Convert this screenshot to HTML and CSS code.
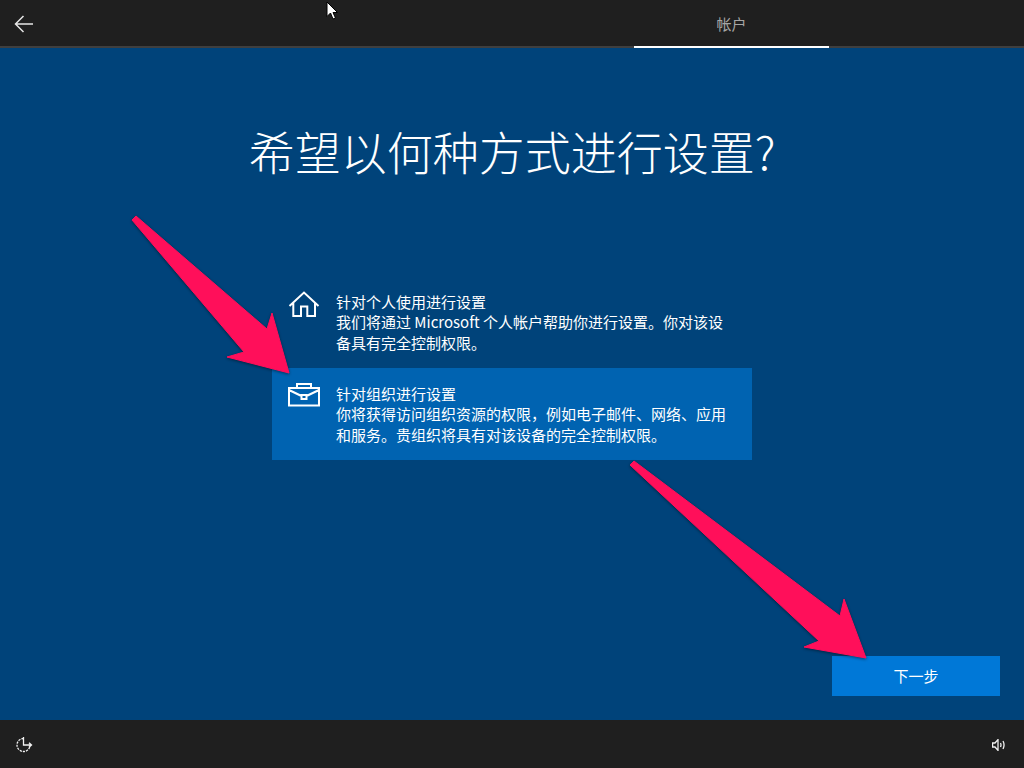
FILE: index.html
```html
<!DOCTYPE html>
<html lang="zh-CN">
<head>
<meta charset="utf-8">
<title>希望以何种方式进行设置?</title>
<link rel="stylesheet" href="styles.css">
</head>
<body>
<div class="screen">
  <header class="topbar">
    <button class="back" aria-label="返回">
      <svg class="icon-back" viewBox="0 0 20 18"><path d="M19 9H1.500M9.500 1L1.500 9l8 8"/></svg>
    </button>
    <div class="tab">帐户</div>
  </header>
  <main class="content">
    <h1 class="title">希望以何种方式进行设置?</h1>
    <ul class="options">
      <li class="option">
        <svg class="option-icon" viewBox="0 0 32 32"><path d="M1.500 14L16 .5 30.500 14M5.300 10.500V24H13v-9.500h6.300V24H27V10.500"/></svg>
        <div class="option-text">
          <div>针对个人使用进行设置</div>
          <div>我们将通过 Microsoft 个人帐户帮助你进行设置。你对该设备具有完全控制权限。</div>
        </div>
      </li>
      <li class="option selected">
        <svg class="option-icon" viewBox="0 0 32 32"><path d="M1 4h30v17.500H1zM9 4V0h14v4M1 6l12.500 6M31 6l-12.500 6M13.500 11h5v4h-5z"/></svg>
        <div class="option-text">
          <div>针对组织进行设置</div>
          <div>你将获得访问组织资源的权限，例如电子邮件、网络、应用和服务。贵组织将具有对该设备的完全控制权限。</div>
        </div>
      </li>
    </ul>
    <div class="actions"><button class="next">下一步</button></div>
  </main>
  <footer class="bottombar">
    <svg class="icon-ease" viewBox="0 0 18 18"><path d="M8.500 2.500a6.500 6.500 0 1 0 6.500 6.500" stroke-dasharray="2.200 1"/><path d="M8.500 1v8H16M14 6.800L16.500 9 14 11.200"/></svg>
    <svg class="icon-volume" viewBox="0 0 14 12"><path d="M.6 4H3L6 .6v10.800L3 8H.6zM8.500 4c.6 1.200.6 2.800 0 4M11 2c1.300 2.500 1.300 5.500 0 8"/></svg>
  </footer>
  <svg class="arrows" viewBox="0 0 1024 768" aria-hidden="true">
    <polygon class="arrow" points="132,220 136,216 267,329 272,313 289,373 227,357 244,352"/>
    <polygon class="arrow" points="630,465 634,461 840,616 844,599 866,658 804,647 819,641"/>
  </svg>
  <svg class="cursor" viewBox="0 0 12 19" aria-hidden="true"><path d="M1 1v14.500l3.500-3.500 2.500 6 2.500-1-2.500-5.500h4.500z"/></svg>
</div>
</body>
</html>
```
FILE: styles.css
```css
* { box-sizing: border-box; }
html, body { margin: 0; height: 100%; overflow: hidden; }
body { font-family: "Noto Sans CJK SC", "Liberation Sans", sans-serif; color: #fff; }
.screen { position: relative; width: 1024px; height: 768px; display: flex; flex-direction: column; background: #00437a; }
.topbar { height: 48px; flex: none; display: flex; justify-content: space-between; background: #1f1f1f; border-bottom: 2px solid #3f3f3f; padding-right: 195px; }
.back { width: 48px; height: 48px; padding: 0 0 0 14px; border: 0; background: none; display: flex; align-items: center; }
.icon-back { width: 20px; height: 18px; fill: none; stroke: #e6e6e6; stroke-width: 1.500; }
.tab { width: 195px; height: 48px; margin-bottom: -2px; border-bottom: 2px solid #fff; text-align: center; font-size: 15px; line-height: 48px; color: #a6a6a6; }
.content { flex: 1; display: flex; flex-direction: column; align-items: center; min-height: 0; }
.title { margin: 71px 0 0; font-size: 46px; line-height: 62px; font-weight: 300; text-align: center; }
.options { list-style: none; margin: 95px 0 0; padding: 0; width: 480px; }
.option { height: 92px; padding: 16px 16px 0; display: flex; gap: 16px; }
.option.selected { background: #0063b1; }
.option-icon { width: 32px; height: 32px; flex: none; fill: none; stroke: #fff; stroke-width: 2; overflow: visible; }
.option-text { font-size: 15px; line-height: 20.300px; width: 400px; }
.actions { margin-top: auto; align-self: stretch; display: flex; justify-content: flex-end; padding: 0 24px 24px 0; }
.next { width: 168px; height: 40px; padding: 0 0 2px; border: 0; background: #0078d7; color: #fff; font: 15px "Noto Sans CJK SC", sans-serif; }
.bottombar { height: 48px; flex: none; display: flex; justify-content: space-between; align-items: center; padding: 2px 18px 0 15px; background: #1f1f1f; }
.icon-ease { width: 18px; height: 18px; fill: none; stroke: #f2f2f2; stroke-width: 1.300; }
.icon-volume { width: 14px; height: 12px; fill: none; stroke: #f2f2f2; stroke-width: 1.300; }
.arrows { position: absolute; left: 0; top: 0; width: 1024px; height: 768px; pointer-events: none; filter: drop-shadow(0 1px 1.500px rgba(0, 0, 0, .45)); }
.arrow { fill: #ff0f5a; stroke: #ff0f5a; stroke-width: 1; stroke-linejoin: round; }
.cursor { position: absolute; left: 326px; top: 1px; width: 12px; height: 19px; fill: #fff; stroke: #000; stroke-width: 1; }
```
